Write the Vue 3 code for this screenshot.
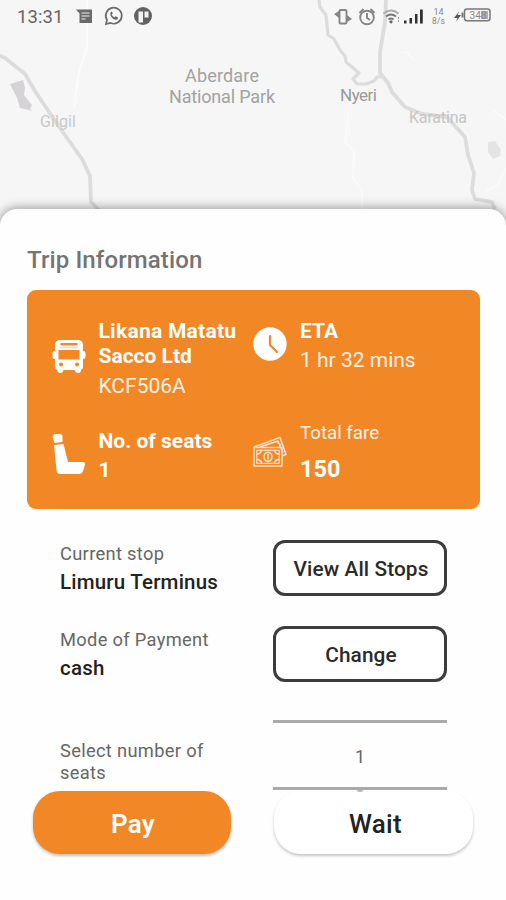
<script setup>
const stops = [
  { label: 'Current stop', value: 'Limuru Terminus', action: 'View All Stops' },
  { label: 'Mode of Payment', value: 'cash', action: 'Change' },
]
</script>

<template>
  <main class="screen">
    <svg class="map" width="506" height="230" viewBox="0 0 506 230">
      <g fill="none" stroke="#fcfcfc" stroke-width="2" opacity=".75">
        <path d="M87 0V48L79 72L74 108" />
        <path d="M349 110L345 143L354 150L353 178L362 190V215" />
        <path d="M402 52l8 1M408 54l7 7" />
        <path d="M493 110L506 120M506 168L498 185L486 191" />
      </g>
      <g fill="none" stroke="#dcdcdc" stroke-width="3.800" stroke-linejoin="round">
        <path d="M-2 55L5 58L25 74L35 91L47 109L62 131L82 159L90 176L91 202L99 210" />
        <path stroke-width="3.200" d="M319 0L320 7L326 15L328 35L334 39L340 50L345 56L346 62L359 73L353 79L357 84L366 84L374 81L377 77L383 77" />
        <path d="M386 0L385 22L380 52L380 73L388 83L392 92L405 107L422 114L447 117L456 127L465 137L468 155L474 173L472 190L475 199L492 202L495 209" />
      </g>
      <path fill="#d5d3d5" d="M10 84L23 80L25 88L24 95L32 105L30 109L33 111L25 109L20 108L17 98Z" />
      <path fill="#e4e4e4" d="M488 142l7-1 6 9-1 6-7 3-5-7Z" />
      <g font-family="Roboto, sans-serif" fill="#a2a2a2">
        <text x="185" y="82" font-size="18" textLength="74">Aberdare</text>
        <text x="169" y="103" font-size="18" textLength="106">National Park</text>
        <text x="340" y="101" font-size="17" fill="#999" textLength="37">Nyeri</text>
        <text x="40" y="127" font-size="16" fill="#c9c9c9" textLength="36">Gilgil</text>
        <text x="409" y="123" font-size="16" fill="#c5c5c5" textLength="58">Karatina</text>
      </g>
    </svg>

    <header class="status">
      <span class="time">13:31</span>
      <svg class="left-icons" width="80" height="24" viewBox="74 5 80 24">
        <path fill="#6a6a6a" d="M76 9.500H92V23H79.500V13.500Z" />
        <path stroke="#c4c4c4" stroke-width="1.500" d="M81.500 13h8M81.500 16h8M81.500 19h4" />
        <path d="M106 24l1-4a8 8 0 1 1 3.500 3Z" fill="none" stroke="#6b6b6b" stroke-width="1.700" />
        <path d="M110.500 12.500c-1 4 3 8 7 7l.5-2-2.500-1.200-1 1c-1.500-.6-2.300-1.500-2.700-2.800l1-1-1-2Z" fill="#666" />
        <circle cx="143" cy="16" r="9" fill="#626262" />
        <path fill="#f4f4f4" d="M138.500 11.500H143V22.500H138.500Z" />
        <path fill="#f4f4f4" d="M144.500 11.500H148.500V17.500H144.500Z" />
      </svg>
      <svg class="right-icons" width="160" height="26" viewBox="332 4 160 26">
        <g fill="none" stroke="#858585" stroke-width="1.900">
          <rect x="339.500" y="10" width="7" height="13.500" rx="1" />
          <circle cx="367" cy="17.500" r="6.800" />
          <path d="M367 13v5l3 2M359.500 13l4-4M374.500 13l-4-4" />
        </g>
        <path fill="#858585" d="M334 14l5-3v7ZM352 19l-5 3v-7Z" />
        <g fill="none" stroke="#777" stroke-width="1.900">
          <path stroke="#aaa" d="M383.500 13.500q7.500-6 15 0" />
          <path d="M386 16.500q5-4 10 0M388.500 19.500q2.500-2 5 0" />
        </g>
        <circle cx="391" cy="21.800" r="1.600" fill="#666" />
        <path stroke="#999" d="M398.500 17v2M398.500 20v2" />
        <path fill="#333" d="M404 20.500h2.500v3H404ZM409.500 18h2.500v5.500h-2.500ZM415 14h2.500v9.500H415ZM420 9.500h2.800v14H420Z" />
        <g font-family="Roboto, sans-serif" fill="#888">
          <text x="433.500" y="14.500" font-size="9" textLength="10">14</text>
          <text x="432" y="24" font-size="8.500" textLength="13">8/s</text>
        </g>
        <path fill="#555" d="M459.500 11L454 18h3.500L456 22L461 15h-3.500Z" />
        <rect x="464.500" y="9" width="25.500" height="11.800" rx="2.500" fill="none" stroke="#777" stroke-width="1.500" />
        <path stroke="#777" stroke-width="2" d="M462.500 12.500v5" />
        <rect x="481" y="11" width="7" height="8" fill="#b0b0b0" />
        <text x="469.500" y="18.500" font-family="Roboto, sans-serif" font-size="10" fill="#888" textLength="17">348</text>
      </svg>
    </header>

    <section class="sheet">
      <h1>Trip Information</h1>
      <div class="card">
        <svg class="ic bus" width="34" height="36" viewBox="0 0 34 36">
          <path fill="#fff" fill-rule="evenodd" d="M7 1H27Q31 2 31 6V12Q33.500 12 33.500 14V18Q33.500 20 31 20V28Q31 30 29 31V32Q28.500 34 26 34T22.500 31H11.500Q11 34 8.500 34T5 31Q3 30 3 27V20Q.5 20 .5 18V14Q.5 12 3 12V6Q3 2 7 1ZM8.500 4V6.500H25.500V4ZM6.500 11V20.500H27.500V11ZM9 23.500A2 2 0 1 0 9 27.500A2 2 0 1 0 9 23.500ZM25 23.500A2 2 0 1 0 25 27.500A2 2 0 1 0 25 23.500Z" />
          <path stroke="#fbd9b8" stroke-width="1.600" d="M8 8.500H26" />
        </svg>
        <div class="info">
          <b class="operator">Likana Matatu</b>
          <b class="company">Sacco Ltd</b>
          <span class="plate">KCF506A</span>
        </div>
        <svg class="ic clock" width="34" height="34" viewBox="0 0 34 34">
          <circle cx="17" cy="17" r="16.700" fill="#fff" />
          <path fill="none" stroke="#f38825" stroke-width="2.200" stroke-linecap="round" stroke-linejoin="round" d="M17 9V18L24 25" />
        </svg>
        <div class="info">
          <b>ETA</b>
          <span class="mins">1 hr 32 mins</span>
        </div>
        <svg class="ic seat" width="34" height="42" viewBox="0 0 34 42">
          <path fill="#fff" d="M3 1H8Q10.500 1 10.500 4V9L2.500 10L.5 4Q.5 1.500 3 1ZM2 12L11.500 11L16 29H31Q33.500 29 33 32L31 38Q30 41 27 41H8Q5 41 4.500 37Z" />
        </svg>
        <div class="info">
          <b>No. of seats</b>
          <b class="count">1</b>
        </div>
        <svg class="ic cash" width="34" height="32" viewBox="0 0 34 32">
          <g fill="none" stroke="#fde0c6" stroke-width="1.600" stroke-linejoin="round">
            <rect x="1" y="11.500" width="28" height="18.500" />
            <path d="M1 11L27 1.500L33 18.500L29 20M7 11L25 5L30 17M25 5Q25 8 28 9" />
            <rect x="3.800" y="14.300" width="22.400" height="13" stroke-width="1.200" />
            <ellipse cx="15" cy="20.700" rx="4" ry="4.500" />
            <path d="M15 18v5.500M4 18Q8 18 8.500 14M26 18Q22 18 21.500 14M4 23.500Q8 23.500 8.500 27M26 23.500Q22 23.500 21.500 27" />
          </g>
        </svg>
        <div class="info">
          <span class="fare">Total fare</span>
          <b class="amount">150</b>
        </div>
      </div>

      <div class="rows">
        <div v-for="s in stops" :key="s.label" class="row">
          <div class="desc">
            <span class="label">{{ s.label }}</span>
            <span class="value">{{ s.value }}</span>
          </div>
          <button class="outline">{{ s.action }}</button>
        </div>
        <div class="row pick">
          <span class="label two">Select number of seats</span>
          <div class="picker">1</div>
        </div>
      </div>
    </section>

    <footer class="actions">
      <button class="pay">Pay</button>
      <button class="wait">Wait</button>
    </footer>
  </main>
</template>

<style>
body {
  margin: 0;
  background: #fefefe;
}
</style>

<style scoped>
.screen {
  position: relative;
  box-sizing: border-box;
  width: 506px;
  height: 900px;
  overflow: hidden;
  background: #f6f6f6;
  font-family: Roboto, sans-serif;
  display: flex;
  flex-direction: column;
}
.map {
  position: absolute;
  top: 0;
  left: 0;
}
.status {
  position: relative;
  height: 209px;
  flex: none;
  display: flex;
  align-items: flex-start;
}
.time {
  margin-left: 17px;
  width: 57px;
  line-height: 34px;
  font-size: 18.500px;
  letter-spacing: 0.1px;
  color: #666;
}
.left-icons {
  margin-top: 5px;
}
.right-icons {
  margin: 4px 14px 0 auto;
}
.sheet {
  position: relative;
  flex: 1;
  background: #fefefe;
  border-radius: 17px 17px 0 0;
  box-shadow: 0 -1px 11px rgba(0, 0, 0, 0.4);
}
h1 {
  margin: 0;
  padding: 36px 27px 0;
  height: 44.500px;
  font-size: 24px;
  line-height: 30px;
  font-weight: 500;
  letter-spacing: 0.12px;
  color: #747474;
}
.card {
  box-sizing: border-box;
  width: 453.500px;
  height: 219.500px;
  margin: 0 0 0 26.500px;
  padding: 28px 0 0 25px;
  border-radius: 9px;
  background: #f28726;
  color: #fff;
  display: grid;
  grid-template-columns: 47px 154.500px 47px 1fr;
  grid-template-rows: 110.500px 1fr;
}
.ic {
  display: block;
}
.bus {
  margin-top: 21px;
}
.clock {
  margin-top: 9px;
}
.seat {
  margin-top: 5px;
}
.cash {
  margin-top: 8px;
}
.info {
  display: flex;
  flex-direction: column;
  font-size: 21px;
  line-height: 26px;
  white-space: nowrap;
}
.info span {
  color: #fff3e6;
}
.info b {
  font-weight: 700;
}
.info .operator {
  letter-spacing: 0.26px;
}
.info .company {
  line-height: 25px;
}
.plate {
  margin-top: 4px;
}
.mins,
.count {
  margin-top: 3px;
}
.info .fare {
  margin-top: -8px;
  font-size: 18.700px;
}
.amount {
  margin-top: 10px;
  font-size: 23.500px;
}
.rows {
  padding: 31px 0 0 60px;
  display: flex;
  flex-direction: column;
  gap: 30px;
}
.row {
  display: flex;
  height: 56px;
}
.desc {
  width: 213px;
  display: flex;
  flex-direction: column;
}
.label {
  font-size: 18.300px;
  line-height: 28px;
  letter-spacing: 0.32px;
  color: #666;
}
.value {
  font-size: 20.500px;
  line-height: 28px;
  font-weight: 500;
  letter-spacing: 0.2px;
  color: #222;
}
.outline {
  box-sizing: border-box;
  width: 174px;
  height: 56px;
  padding: 2px 0 0 2px;
  border: 3.500px solid #3c3c3c;
  border-radius: 12px;
  background: #fff;
  font: 500 20.800px Roboto, sans-serif;
  letter-spacing: 0.1px;
  color: #2a2a2a;
}
.pick {
  padding-top: 8px;
}
.label.two {
  width: 160px;
  margin: 20px 53px 0 0;
  line-height: 22px;
}
.picker {
  position: relative;
  box-sizing: border-box;
  width: 174px;
  height: 70px;
  border-top: 3px solid #aaa;
  border-bottom: 3px solid #aaa;
  text-align: center;
  font-size: 18px;
  line-height: 68px;
  color: #666;
}
.picker::after {
  content: '';
  position: absolute;
  left: 84px;
  bottom: -5px;
  width: 6px;
  height: 2px;
  border-radius: 0 0 3px 3px;
  background: #bbb;
}
.actions {
  position: absolute;
  left: 33px;
  top: 791px;
  display: flex;
  gap: 43px;
}
.actions button {
  width: 198px;
  height: 63px;
  padding: 3px 0 0 2px;
  border: 0;
  border-radius: 27px;
  font: 500 26px Roboto, sans-serif;
  letter-spacing: 0.3px;
}
.actions .pay {
  background: #f28726;
  color: #fff;
  font-weight: 600;
  box-shadow: 0 2px 3px rgba(0, 0, 0, 0.25);
}
.actions .wait {
  width: 199px;
  padding-left: 4px;
  background: #fff;
  clip-path: inset(1px -5px -8px -5px);
  color: #222;
  box-shadow: 0 2px 3px rgba(0, 0, 0, 0.22);
}
</style>
